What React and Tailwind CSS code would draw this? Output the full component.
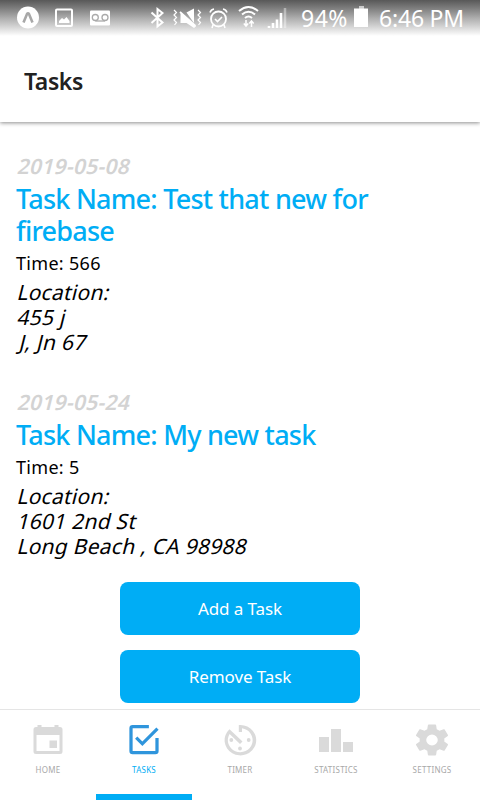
import React from "react";

const FONT = "font-['Noto_Sans',sans-serif]";

function StatusBar() {
  return (
    <div className="relative z-10 h-9 shrink-0 bg-linear-to-b from-[#585858] via-[#adadad] via-50% to-white flex">
      <svg width="290" height="36" viewBox="0 0 290 36" fill="none" stroke="#fff">
        <circle cx="28" cy="17.5" r="11" fill="#fff" stroke="none" />
        <path d="M23.5 22.5 27 14q1-1.6 2 0l3.5 8.5" stroke="#a8a8a8" strokeWidth="2.6" />
        <rect x="56" y="9.5" width="16" height="16.5" rx="1" strokeWidth="2" />
        <path d="M59 23v-2l3-3 2 1.5 2.5-2.5 3 4v2z" fill="#fff" stroke="none" />
        <rect x="90" y="10.5" width="20" height="15" rx="1" fill="#fff" stroke="none" />
        <g stroke="#aaa" strokeWidth="1.3">
          <circle cx="95.3" cy="17.5" r="3" />
          <circle cx="105" cy="17.5" r="3" />
          <path d="M95.3 21h9.7" />
        </g>
        <path d="m151.5 12.5 11 10-5 4V9l5 4-11 10" strokeWidth="2" />
        <path d="m174 10 2.5 2.5-2.5 2.5 2.5 2.5-2.5 2.5 2.5 2.5-2 2.5M198 10l2.5 2.5-2.5 2.5 2.5 2.5-2.5 2.5 2.5 2.5-2 2.5" strokeWidth="1.2" />
        <path d="M186.500 12.500 194 8.500V23zM180.500 14h2L196 26.500l-2 1.500-7.500-5h-6z" fill="#fff" stroke="none" />
        <path d="m180 12 15.500 14" strokeWidth="1.800" />
        <circle cx="218.500" cy="19" r="7.500" strokeWidth="1.800" />
        <path d="m215 19 2.500 2.500 4.500-4.500M210 12.500q1-3 4-3.500M227 12.500q-1-3-4-3.500M213 25l-1 3M224 25l1 3" strokeWidth="1.600" />
        <path d="M239 11q9.500-8 19 0M242 14.500q6.500-5.500 13 0M245 18q3.500-3 7 0" strokeWidth="2" />
        <path d="M246 20v6m-2.200-2.500L246 26l2.200-2.500M251.500 27v-6m-2.200 2.500 2.200-2.500 2.200 2.500" strokeWidth="1.500" />
        <path d="M269 28v-2M273 28v-5M277 28v-8.500M281 28V13" strokeWidth="2.600" />
        <path d="M285 28V8" strokeWidth="2.500" opacity=".4" />
      </svg>
      <div className="flex text-white text-[23px] leading-[37px] whitespace-nowrap">
        <span className="ml-[11px] w-[47px] tracking-[0.5px]">94%</span>
        <svg className="ml-[6px]" width="14" height="36" viewBox="0 0 14 36">
          <path d="M5 6h5v3H5z" fill="#ccc" />
          <path d="M0 8.500h14V27H0z" fill="#fff" />
        </svg>
        <span className="ml-[11px] tracking-[-0.2px]">6:46 PM</span>
      </div>
    </div>
  );
}

function Task({ date, name, time, location }) {
  return (
    <article className="flex flex-col px-4 whitespace-nowrap">
      <p className="w-max text-[21px] leading-7 h-[31px] pl-0.5 -skew-x-[14deg] font-semibold text-[#d3d3d3] tracking-[0.3px]">{date}</p>
      <h2 className="text-[27px] leading-8 font-medium text-[#00adf5] tracking-[-0.76px] whitespace-pre">{name}</h2>
      <p className="text-[18px] leading-8 h-[33px] text-black tracking-[0.3px]">{time}</p>
      {location.map((line) => (
        <p key={line} className={`w-max text-[21px] leading-[25px] -skew-x-[14deg] text-black tracking-[0.26px] ${line.startsWith("J") ? "pl-1 tracking-[0.7px]" : "pl-0.5"}`}>{line}</p>
      ))}
    </article>
  );
}

function Button({ children }) {
  return (
    <button className="w-60 h-[53px] rounded-lg bg-[#00adf5] text-white text-[17px] tracking-[-0.1px]">{children}</button>
  );
}

const TABS = [
  {
    label: "HOME",
    icon: (
      <path fillRule="evenodd" d="M9.500 5h4v2h13V5h4v2h1.500q2.500 0 2.500 2.500v22q0 2.500-2.500 2.500H8q-2.500 0-2.500-2.500v-22Q5.500 7 8 7h1.500zM8.500 15v16h23V15zM21.500 20.500h7.500V28h-7.500z" />
    ),
  },
  {
    label: "TASKS",
    active: true,
    icon: (
      <path transform="translate(.5 0) scale(1.625)" d="M19 19H5V5h10V3H5a2 2 0 0 0-2 2v14a2 2 0 0 0 2 2h14a2 2 0 0 0 2-2v-8h-2M7.910 10.080 6.500 11.500 11 16 21 6l-1.410-1.420L11 13.170z" />
    ),
  },
  {
    label: "TIMER",
    icon: (
      <g>
        <path d="M18.800 5h1.500a15.800 15.200 0 1 1-10.800 4.200l13 12.300-2.500 2.500-10.400-10A12.400 12 0 1 0 22 8.300V12h-3.200z" />
        <circle cx="11.300" cy="20" r="1.900" />
        <circle cx="28.700" cy="20" r="1.900" />
        <circle cx="20" cy="28.500" r="1.900" />
      </g>
    ),
  },
  {
    label: "STATISTICS",
    icon: <path d="M3 17h10v15H3zM15 9h10v23H15zM27 22h10v10H27z" />,
  },
  {
    label: "SETTINGS",
    icon: (
      <path transform="translate(.2 1.400) scale(1.650 1.550)" d="M12 15.500A3.500 3.500 0 0 1 8.500 12 3.500 3.500 0 0 1 12 8.500a3.500 3.500 0 0 1 3.500 3.500 3.500 3.500 0 0 1-3.500 3.500m7.430-2.530c.04-.32.07-.64.07-.97 0-.33-.03-.66-.07-1l2.110-1.630c.19-.15.24-.42.12-.64l-2-3.460c-.12-.22-.39-.31-.61-.22l-2.490 1c-.52-.39-1.060-.73-1.690-.98l-.37-2.650A.506.506 0 0 0 14 2h-4c-.25 0-.46.18-.5.42l-.37 2.650c-.63.25-1.170.59-1.690.98l-2.490-1c-.22-.09-.49 0-.61.22l-2 3.460c-.13.22-.07.49.12.64L4.570 11c-.04.34-.07.67-.07 1 0 .33.03.65.07.97l-2.110 1.660c-.19.15-.25.42-.12.64l2 3.460c.12.22.39.3.61.22l2.490-1.010c.52.4 1.060.74 1.690.99l.37 2.650c.04.24.25.42.5.42h4c.25 0 .46-.18.5-.42l.37-2.650c.63-.26 1.170-.59 1.690-.99l2.490 1.010c.22.08.49 0 .61-.22l2-3.460c.12-.22.07-.49-.12-.64z" />
    ),
  },
];

export default function App() {
  return (
    <div className={`${FONT} w-[480px] h-[800px] overflow-hidden bg-white flex flex-col`}>
      <StatusBar />
      <header className="h-[86px] shrink-0 px-6 pt-[29px] bg-white shadow-[0_1px_4px_rgba(0,0,0,0.45)]">
        <h1 className="text-[23px] leading-8 font-semibold text-[#212121] tracking-[-0.4px]">Tasks</h1>
      </header>
      <main className="h-[587px] shrink-0 pt-[30px] flex flex-col">
        <Task date="2019-05-08" name={"Task Name: Test that new for\nfirebase"} time="Time: 566" location={["Location:", "455 j", "J, Jn 67"]} />
        <div className="h-[33px] shrink-0" />
        <Task date="2019-05-24" name="Task Name: My new task" time="Time: 5" location={["Location:", "1601 2nd St", "Long Beach , CA 98988"]} />
        <div className="mt-[23px] flex flex-col items-center gap-[15px]">
          <Button>Add a Task</Button>
          <Button>Remove Task</Button>
        </div>
      </main>
      <nav className="h-[91px] shrink-0 grid grid-cols-5 border-t border-[#e5e5e5] bg-white">
        {TABS.map((tab) => (
          <div key={tab.label} className={`flex flex-col items-center pt-[10px] border-b-[6px] ${tab.active ? "border-[#00adf5] text-[#00adf5]" : "border-transparent text-[#a8a8a8]"}`}>
            <svg width="40" height="40" viewBox="0 0 40 40" className={tab.active ? "fill-[#2f95dc]" : "fill-[#dadada]"}>
              {tab.icon}
            </svg>
            <span className="text-[8px] leading-3 mt-[4px] tracking-[0.25px]">{tab.label}</span>
          </div>
        ))}
      </nav>
    </div>
  );
}
